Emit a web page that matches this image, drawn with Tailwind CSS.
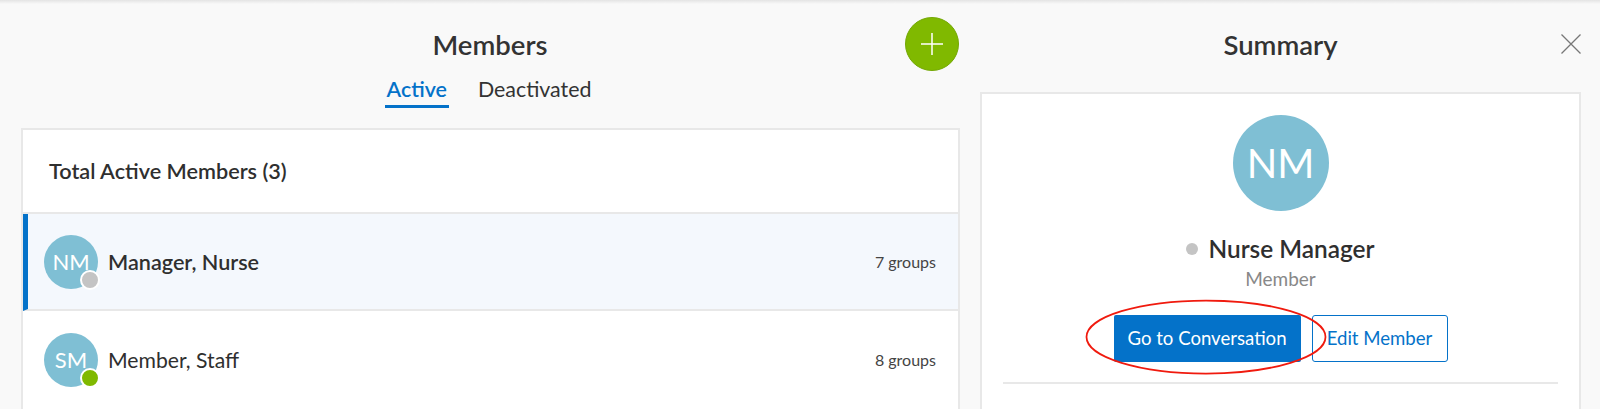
<!DOCTYPE html>
<html lang="en">
<head>
  <meta charset="UTF-8" />
  <title>Members</title>
  <script src="https://cdn.jsdelivr.net/npm/@tailwindcss/browser@4"></script>
</head>
<body class="bg-[#f9f9f9] font-['Lato',sans-serif] text-[#2f2f2f]">
  <div class="relative h-[409px] w-[1600px] overflow-hidden">
    <!-- top shadow -->
    <div class="absolute left-0 top-0 h-[4px] w-full bg-gradient-to-b from-[#e4e4e4] to-[#f9f9f9]"></div>

    <div class="flex pl-[21px]">
      <!-- members column -->
      <section class="relative w-[939px]">
        <div class="flex h-[128px] flex-col items-center pr-[1px]">
          <h1 class="mt-[26px] text-[27.5px] leading-[38px] font-semibold text-[#333]">Members</h1>
          <div class="mt-[10px] flex gap-[29px] pr-[4px] text-[21.4px] leading-[30px]">
            <a class="h-[34px] border-b-[3px] border-[#0472c9] px-[2px] font-semibold text-[#0472c9]">Active</a>
            <a class="text-[#333]">Deactivated</a>
          </div>
        </div>
        <button class="absolute left-[884px] top-[17px] flex h-[54px] w-[54px] items-center justify-center rounded-full border border-[#74a805] bg-[#80b900]">
          <svg width="22" height="22" viewBox="0 0 22 22" fill="none" stroke="#fff" stroke-width="1.5"><path d="M11 0v22M0 11h22"/></svg>
        </button>

        <div class="h-[290px] border-2 border-[#e8e8e8] bg-white">
          <div class="flex h-[84px] items-center border-b-2 border-[#e8e8e8] pl-[26px] text-[21.65px] font-semibold">Total Active Members (3)</div>

          <div class="flex h-[97px] items-center border-b-2 border-[#e8e8e8] border-l-[5px] border-l-[#0472c9] bg-[#f4f8fd] pl-[16px] pr-[22px]">
            <div class="relative flex h-[54px] w-[54px] items-center justify-center rounded-full bg-[#7fbfd4] text-[22px] text-white">
              NM
              <span class="absolute bottom-[-1px] right-[-2px] h-[20px] w-[20px] rounded-full border-2 border-white bg-[#c4c4c4]"></span>
            </div>
            <span class="ml-[10px] mt-[2px] text-[21.6px] font-semibold">Manager, Nurse</span>
            <span class="ml-auto text-[16px] text-[#444]">7 groups</span>
          </div>

          <div class="flex h-[97px] items-center border-l-[5px] border-l-white pl-[16px] pr-[22px]">
            <div class="relative flex h-[54px] w-[54px] items-center justify-center rounded-full bg-[#7fbfd4] text-[22px] text-white">
              SM
              <span class="absolute bottom-[-1px] right-[-2px] h-[20px] w-[20px] rounded-full border-2 border-white bg-[#80b900]"></span>
            </div>
            <span class="ml-[10px] mt-[2px] text-[21.2px]">Member, Staff</span>
            <span class="ml-auto text-[16px] text-[#444]">8 groups</span>
          </div>
        </div>
      </section>

      <!-- summary column -->
      <section class="relative ml-[20px] w-[601px]">
        <div class="flex h-[92px] justify-center">
          <h2 class="mt-[26px] text-[27.5px] leading-[38px] font-semibold text-[#333]">Summary</h2>
        </div>
        <svg class="absolute left-[581px] top-[34px]" width="20" height="20" viewBox="0 0 20 20" fill="none" stroke="#777" stroke-width="1.3"><path d="M0.5 0.5l19 19M19.5 0.5l-19 19"/></svg>

        <div class="flex h-[326px] flex-col items-center border-2 border-[#e8e8e8] bg-white">
          <div class="mt-[21px] flex h-[96px] w-[96px] items-center justify-center rounded-full bg-[#7fbfd4] text-[40px] text-white">NM</div>
          <div class="mt-[22px] flex h-[32px] items-center gap-[10px]">
            <span class="h-[12px] w-[12px] rounded-full bg-[#c4c4c4]"></span>
            <span class="text-[24.4px] font-semibold">Nurse Manager</span>
          </div>
          <div class="mt-[2px] text-[19px] leading-[24px] text-[#888]">Member</div>
          <div class="mt-[24px] flex gap-[11px]">
            <button class="h-[47px] w-[187px] rounded-[2px] bg-[#0472c9] text-[18.6px] text-white">Go to Conversation</button>
            <button class="h-[47px] w-[136px] rounded-[3px] border border-[#0472c9] bg-white text-[18.6px] text-[#0472c9]">Edit Member</button>
          </div>
          <div class="mt-[20px] h-[2px] w-[555px] bg-[#e8e8e8]"></div>
        </div>
      </section>
    </div>

    <!-- red annotation -->
    <svg class="absolute left-[1084px] top-[298px]" width="244" height="78" viewBox="0 0 244 78" fill="none" stroke="#f01a0e" stroke-width="1.75"><ellipse cx="122" cy="39" rx="119.5" ry="36.5"/></svg>
  </div>
</body>
</html>
